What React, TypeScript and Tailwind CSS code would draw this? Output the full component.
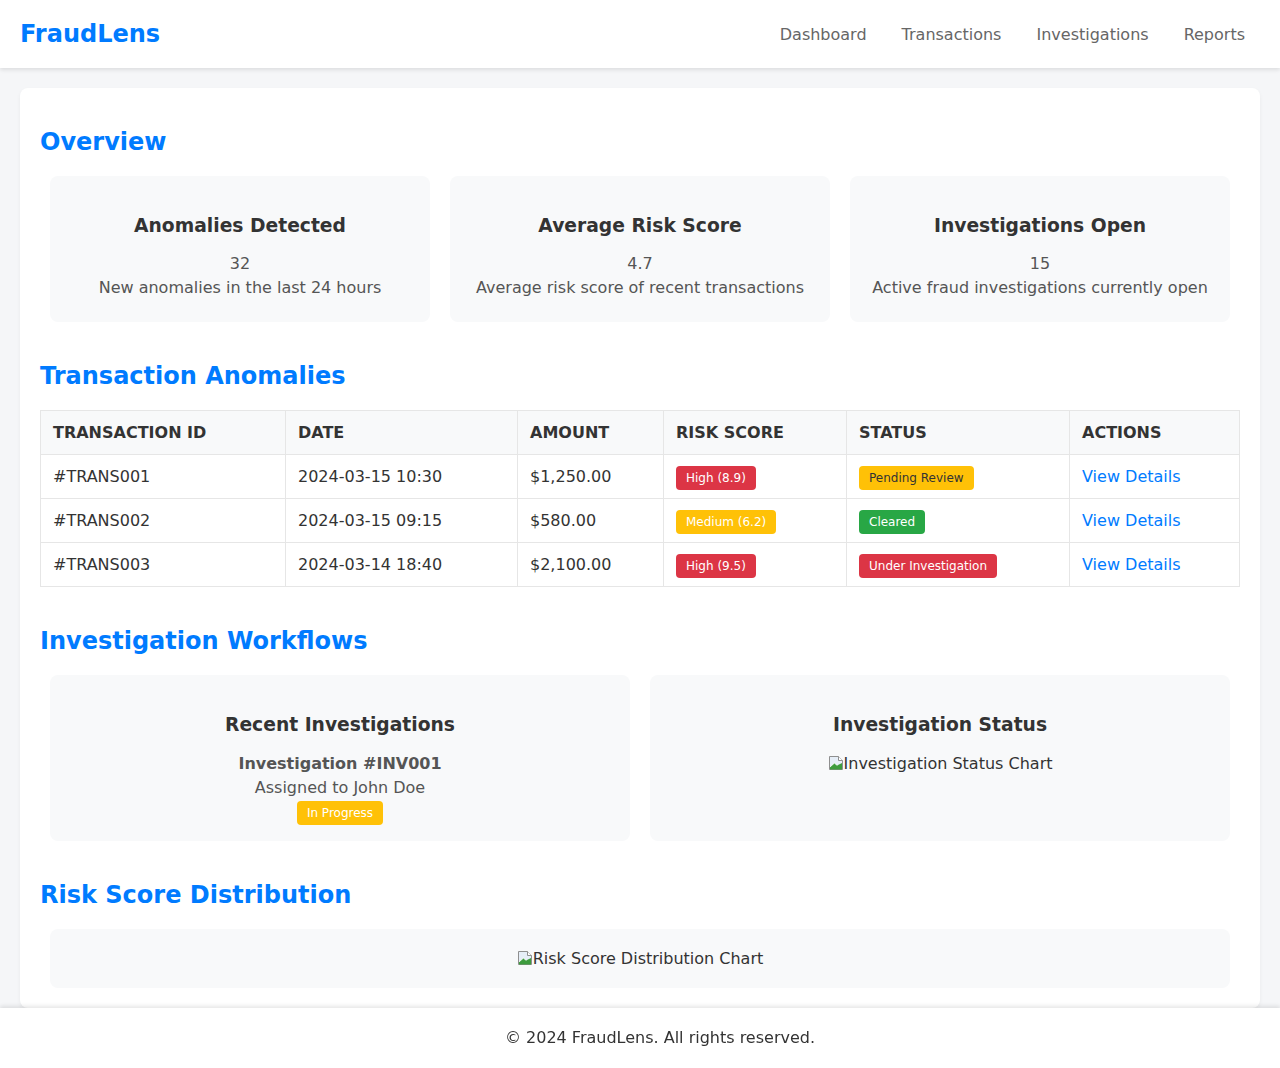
import React from "react";

function BrokenImage() {
  return (
    <svg width="16" height="16" viewBox="0 0 16 16" className="inline-block shrink-0">
      <path d="M1.5 1.5h9l4 4v9h-13z" fill="#e6eef7" stroke="#8f8f8f" />
      <path d="M2 14.5V12l4.5-4 2.5 2.5L14 8v6.5z" fill="#3d9c3d" />
      <path d="M2 12l4.5-4 2.5 2.5" fill="none" stroke="#ffffff" strokeWidth="0.8" />
      <path d="M10.5 1.5v4h4" fill="#ffffff" stroke="#8f8f8f" />
    </svg>
  );
}

function StatCard({ title, value, desc }: { title: string; value: string; desc: string }) {
  return (
    <div className="bg-[#f8f9fa] rounded-[8px] p-[20px] text-center flex flex-col">
      <h3 className="mt-[18.72px] text-[18.72px] font-bold text-[#333]">{title}</h3>
      <p className="mt-[18.72px] text-[16px] text-[#555]">{value}</p>
      <p className="mt-[5px] mb-[5px] text-[16px] text-[#555]">{desc}</p>
    </div>
  );
}

function SectionTitle({ children }: { children: React.ReactNode }) {
  return <h2 className="mt-[20px] mb-[20px] text-[24px] font-bold text-[#007bff]">{children}</h2>;
}

const rows = [
  {
    id: "#TRANS001",
    date: "2024-03-15 10:30",
    amount: "$1,250.00",
    risk: "High (8.9)",
    riskCls: "bg-[#dc3545] text-white",
    status: "Pending Review",
    statusCls: "bg-[#ffc107] text-[#333]",
  },
  {
    id: "#TRANS002",
    date: "2024-03-15 09:15",
    amount: "$580.00",
    risk: "Medium (6.2)",
    riskCls: "bg-[#ffc107] text-white",
    status: "Cleared",
    statusCls: "bg-[#28a745] text-white",
  },
  {
    id: "#TRANS003",
    date: "2024-03-14 18:40",
    amount: "$2,100.00",
    risk: "High (9.5)",
    riskCls: "bg-[#dc3545] text-white",
    status: "Under Investigation",
    statusCls: "bg-[#dc3545] text-white",
  },
];

export default function App() {
  const th = "border border-[#e6e6e6] px-[12px] py-[12px] text-left font-bold uppercase text-[#333]";
  const td = "border border-[#e6e6e6] px-[12px] py-[12px] text-left text-[#333]";
  const badge = "px-[10px] py-[5px] text-[12px] rounded-[4px]";
  return (
    <div className="min-h-screen bg-[#f5f6f8] font-['DejaVu_Sans',sans-serif] leading-[normal] text-[16px] text-[#333]">
      <header className="relative h-[68px] bg-white shadow-[0_2px_4px_rgba(0,0,0,0.1)] flex items-center justify-between pl-[20px] pr-[35px]">
        <div className="text-[24px] font-bold text-[#007bff]">FraudLens</div>
        <nav className="flex gap-[35px] text-[16px] text-[#666]">
          <a>Dashboard</a>
          <a>Transactions</a>
          <a>Investigations</a>
          <a>Reports</a>
        </nav>
      </header>

      <main className="p-[20px] pb-[80px]">
        <div className="bg-white rounded-[8px] shadow-[0_2px_4px_rgba(0,0,0,0.05)] p-[20px] flex flex-col">
          <section className="flex flex-col mb-[20px]">
            <SectionTitle>Overview</SectionTitle>
            <div className="grid grid-cols-3 gap-[20px] mx-[10px]">
              <StatCard title="Anomalies Detected" value="32" desc="New anomalies in the last 24 hours" />
              <StatCard title="Average Risk Score" value="4.7" desc="Average risk score of recent transactions" />
              <StatCard title="Investigations Open" value="15" desc="Active fraud investigations currently open" />
            </div>
          </section>

          <section className="flex flex-col mb-[20px]">
            <SectionTitle>Transaction Anomalies</SectionTitle>
            <table className="w-full border-collapse table-fixed">
              <colgroup>
                <col className="w-[245px]" />
                <col className="w-[232px]" />
                <col className="w-[146px]" />
                <col className="w-[183px]" />
                <col className="w-[223px]" />
                <col className="w-[170px]" />
              </colgroup>
              <thead>
                <tr className="bg-[#f8f9fa]">
                  <th className={th}>Transaction ID</th>
                  <th className={th}>Date</th>
                  <th className={th}>Amount</th>
                  <th className={th}>Risk Score</th>
                  <th className={th}>Status</th>
                  <th className={th}>Actions</th>
                </tr>
              </thead>
              <tbody>
                {rows.map((r) => (
                  <tr key={r.id}>
                    <td className={td}>{r.id}</td>
                    <td className={td}>{r.date}</td>
                    <td className={td}>{r.amount}</td>
                    <td className={td}>
                      <span className={`${badge} ${r.riskCls}`}>{r.risk}</span>
                    </td>
                    <td className={td}>
                      <span className={`${badge} ${r.statusCls}`}>{r.status}</span>
                    </td>
                    <td className={td}>
                      <a className="text-[#007bff]">View Details</a>
                    </td>
                  </tr>
                ))}
              </tbody>
            </table>
          </section>

          <section className="flex flex-col mb-[20px]">
            <SectionTitle>Investigation Workflows</SectionTitle>
            <div className="grid grid-cols-2 gap-[20px] mx-[10px]">
              <div className="bg-[#f8f9fa] rounded-[8px] p-[20px] text-center flex flex-col">
                <h3 className="mt-[18.72px] text-[18.72px] font-bold text-[#333]">Recent Investigations</h3>
                <p className="mt-[18.72px] font-bold text-[#555]">Investigation #INV001</p>
                <p className="mt-[5px] text-[#555]">Assigned to John Doe</p>
                <div className="mt-[5px]">
                  <span className={`${badge} bg-[#ffc107] text-white`}>In Progress</span>
                </div>
              </div>
              <div className="bg-[#f8f9fa] rounded-[8px] p-[20px] text-center flex flex-col">
                <h3 className="mt-[18.72px] text-[18.72px] font-bold text-[#333]">Investigation Status</h3>
                <div className="mt-[18.72px] flex items-center justify-center text-[#333]">
                  <BrokenImage />
                  <span>Investigation Status Chart</span>
                </div>
              </div>
            </div>
          </section>

          <section className="flex flex-col">
            <SectionTitle>Risk Score Distribution</SectionTitle>
            <div className="mx-[10px] bg-[#f8f9fa] rounded-[8px] p-[20px] flex items-center justify-center text-[#333]">
              <BrokenImage />
              <span>Risk Score Distribution Chart</span>
            </div>
          </section>
        </div>
      </main>

      <footer className="fixed bottom-0 inset-x-0 bg-white pl-[40px] py-[20px] leading-[20px] text-center text-[16px] text-[#333] shadow-[0_-2px_4px_rgba(0,0,0,0.1)]">
        © 2024 FraudLens. All rights reserved.
      </footer>
    </div>
  );
}
